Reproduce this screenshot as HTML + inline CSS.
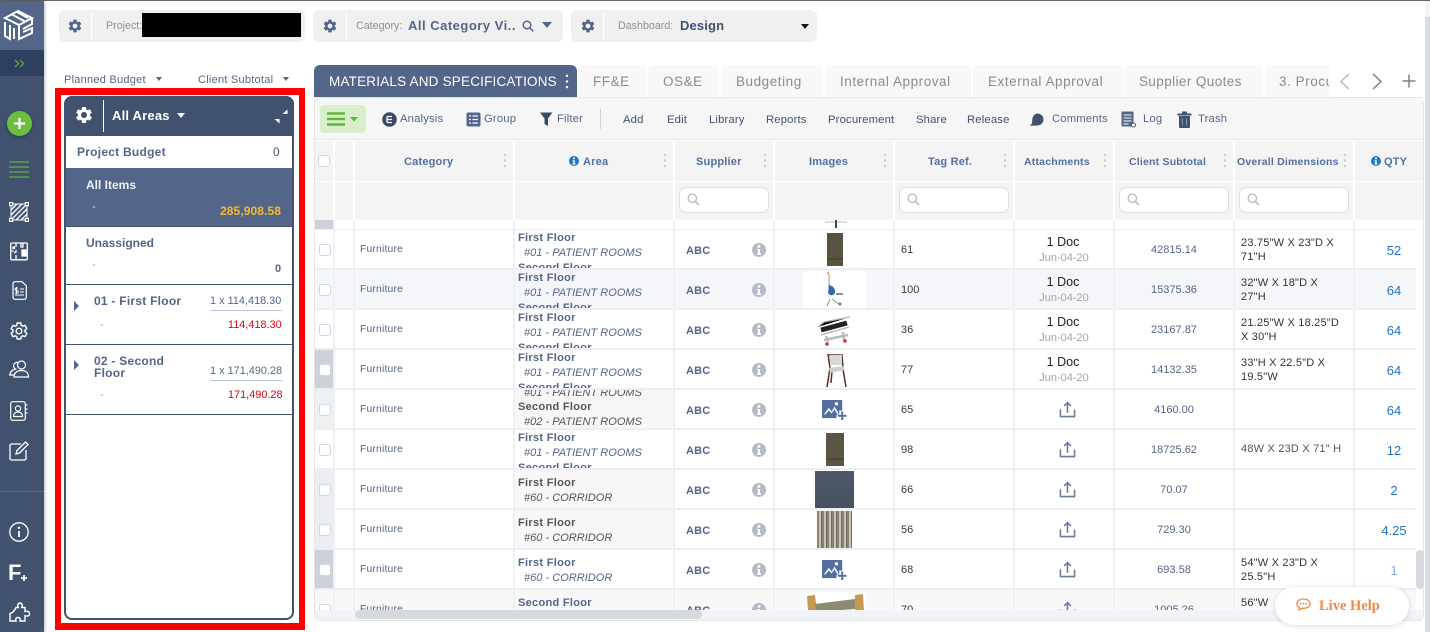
<!DOCTYPE html>
<html lang="en"><head><meta charset="utf-8"><title>Materials and Specifications</title>
<style>
*{box-sizing:border-box}
html,body{margin:0;padding:0;width:1430px;height:632px;overflow:hidden;background:#fff;font-family:"Liberation Sans",sans-serif;color:#536589}
.a{position:absolute;white-space:nowrap}
svg{position:absolute;display:block;overflow:visible}
.box{position:absolute;top:10px;height:32px;background:#f0f0f0;border-radius:6px}
.tab{position:absolute;top:65px;height:32px;background:#f8f8f8;border-radius:6px 6px 0 0;color:#8b8b8b;font-size:13.5px;line-height:33px;text-align:left;padding-left:15px;letter-spacing:.55px;white-space:nowrap;overflow:hidden}
.tb{position:absolute;font-size:11.3px;color:#41526f;line-height:14px;white-space:nowrap;letter-spacing:.15px}
.th{position:absolute;top:155px;font-size:11px;line-height:14px;font-weight:bold;color:#536f9f;white-space:nowrap;letter-spacing:.2px}
.fl{position:absolute;top:187px;height:26px;background:#fff;border:1px solid #dcdfe5;border-radius:7px}
.r{position:absolute;left:0;width:1102px;height:40px;background:#fff;border-bottom:1px solid #eceef2;border-top:1px solid #eceef2}
.r>*{position:absolute;white-space:nowrap}
.ck{left:4px;top:14px;width:12px;height:12px;background:#fff;border:1px solid #cfd6e4;border-radius:3px}
.fu{left:45px;top:13px;font-size:10.300px;line-height:14px;color:#536589;letter-spacing:.2px}
.ar{left:200px;top:0;width:159px;height:38px;overflow:hidden;font-size:11px;line-height:15px}
.ar b{position:absolute;left:3px;margin-top:1px;white-space:nowrap;letter-spacing:.3px}
.ar i{position:absolute;left:9px;margin-top:1px;white-space:nowrap;font-size:11px;letter-spacing:.02px}
.abc{left:371px;top:14px;font-size:11px;line-height:15px;font-weight:bold;color:#536589;letter-spacing:.2px}
.tg{left:586px;top:13px;font-size:11px;line-height:15px;color:#3a3a3a}
.dc{left:698px;width:100px;top:4px;text-align:center;font-size:12.500px;line-height:16px;color:#222}
.dt{left:699px;width:100px;top:21px;text-align:center;font-size:11px;line-height:14px;color:#a5a5a5}
.st{left:799px;width:120px;top:13px;text-align:center;font-size:11px;line-height:14px;color:#536589}
.di{left:926px;top:6px;font-size:11px;line-height:14px;color:#333;letter-spacing:.2px}
.q{left:1040px;width:78px;top:13px;text-align:center;font-size:13px;line-height:16px;color:#1e73c8}
.inf{left:437px;top:13px;color:#b4bac6}
.pn{position:absolute;left:66px;width:226px}
</style></head><body>
<svg width="0" height="0" style="position:absolute"><defs>
<symbol id="gear" viewBox="0 0 24 24"><path fill="currentColor" d="M19.14 12.94c.04-.3.06-.61.06-.94 0-.32-.02-.64-.07-.94l2.03-1.58a.49.49 0 0 0 .12-.61l-1.92-3.32a.488.488 0 0 0-.59-.22l-2.39.96c-.5-.38-1.03-.7-1.62-.94l-.36-2.54a.484.484 0 0 0-.48-.41h-3.84c-.24 0-.43.17-.47.41l-.36 2.54c-.59.24-1.13.57-1.62.94l-2.39-.96c-.22-.08-.47 0-.59.22L2.74 8.87c-.12.21-.08.47.12.61l2.03 1.58c-.05.3-.09.63-.09.94s.02.64.07.94l-2.03 1.58a.49.49 0 0 0-.12.61l1.92 3.32c.12.22.37.29.59.22l2.39-.96c.5.38 1.03.7 1.62.94l.36 2.54c.05.24.24.41.48.41h3.84c.24 0 .44-.17.47-.41l.36-2.54c.59-.24 1.13-.56 1.62-.94l2.39.96c.22.08.47 0 .59-.22l1.92-3.32c.12-.22.07-.47-.12-.61l-2.01-1.58zM12 15.6c-1.98 0-3.6-1.62-3.6-3.6s1.62-3.6 3.6-3.6 3.6 1.62 3.6 3.6-1.62 3.6-3.6 3.6z"/></symbol>
<symbol id="inf" viewBox="0 0 14 14"><circle cx="7" cy="7" r="7" fill="currentColor"/><circle cx="7" cy="3.4" r="1.4" fill="#fff"/><path d="M5 6h3v4.6h1.2V12H4.8v-1.4H6V7.3H5z" fill="#fff"/></symbol>
<symbol id="up" viewBox="0 0 18 18"><path d="M1.5 9v7.5h15V9M9 12.5V2M5.5 5.2 9 1.7l3.5 3.5" fill="none" stroke="#6b7d9e" stroke-width="1.7"/></symbol>
<symbol id="pic" viewBox="0 0 26 24"><path fill="#536f9f" d="M0 1h21v11h-3v4h-3v4H0z"/><path fill="#fff" d="M2 16l5-7 3 4 3-5 4 6v2H2z" opacity=".95"/><path fill="#536f9f" d="M3 17l4-5 3 3 3-4 3 5v1z"/><circle cx="15" cy="5" r="1.8" fill="#fff"/><path stroke="#536f9f" stroke-width="2" d="M21 13v9M16.500 17.500h9"/></symbol>
<symbol id="sr" viewBox="0 0 14 14"><circle cx="5.700" cy="5.700" r="4.500" fill="none" stroke="#a8adb6" stroke-width="1.200"/><path d="M9 9l4 4" stroke="#a8adb6" stroke-width="1.400"/></symbol>
<symbol id="dots" viewBox="0 0 4 16"><circle cx="2" cy="2" r="1.300" fill="#c9cdd4"/><circle cx="2" cy="8" r="1.300" fill="#c9cdd4"/><circle cx="2" cy="14" r="1.300" fill="#c9cdd4"/></symbol>
</defs></svg>

<!-- top line and page scrollbar -->
<div class="a" style="left:0;top:0;width:1430px;height:1px;background:#666"></div>
<div class="a" style="left:1425px;top:1px;width:5px;height:631px;background:#f3f4f5"></div>
<div class="a" style="left:1425px;top:17px;width:5px;height:615px;background:#d9dee1"></div>

<!-- sidebar -->
<div class="a" style="left:0;top:1px;width:44px;height:631px;background:#41526f;box-shadow:1px 0 3px rgba(0,0,0,.25)"></div>
<div class="a" style="left:0;top:1px;width:44px;height:49px;background:#536589"></div>
<div class="a" style="left:0;top:50px;width:44px;height:26px;background:#2f3f5f"></div>
<div class="a" style="left:0;top:491px;width:44px;height:1px;background:#5a6a87"></div>
<svg style="left:4px;top:9px" width="30" height="32" viewBox="0 0 30 32" fill="none" stroke="#fff" stroke-width="2"><path d="M1 9 14 2l14 7-13 7zM1 13v14l5 3V16M10 19v11M15 17v13l13-6V19l-9 4M28 9v6l-9 5M8 5.500l13 7M13 3l11 6"/></svg>
<svg style="left:14px;top:59px" width="11" height="9" viewBox="0 0 11 9" fill="none" stroke="#5cb440" stroke-width="1.200"><path d="M1 1l3.500 3.500L1 8M6 1l3.500 3.500L6 8"/></svg>
<div class="a" style="left:7px;top:111px;width:25px;height:25px;border-radius:50%;background:#6abf3f;box-shadow:0 1px 3px rgba(0,0,0,.35)"></div>
<svg style="left:13px;top:117px" width="13" height="13" viewBox="0 0 13 13"><path d="M6.500 1v11M1 6.500h11" stroke="#fff" stroke-width="2.200"/></svg>
<svg style="left:9px;top:161px" width="20" height="17" viewBox="0 0 20 17"><path d="M0 1h20M0 6h20M0 11h20M0 16h20" stroke="#5fb045" stroke-width="1.300"/></svg>
<svg style="left:9px;top:202px" width="20" height="20" viewBox="0 0 20 20" fill="none" stroke="#fff"><rect x="2" y="2" width="16" height="16" stroke-width="1"/><path d="M2 8 8 2M2 13 13 2M2 18 18 2M7 18 18 7M12 18l6-6" stroke-width="1.300"/><g fill="#41526f" stroke-width="1.200"><rect x=".6" y=".6" width="3" height="3"/><rect x="16.400" y=".6" width="3" height="3"/><rect x=".6" y="16.400" width="3" height="3"/><rect x="16.400" y="16.400" width="3" height="3"/></g></svg>
<svg style="left:10px;top:242px" width="18" height="19" viewBox="0 0 18 19" fill="none" stroke="#fff" stroke-width="1.300"><rect x=".7" y="1" width="16.600" height="16.800" rx="1"/><path d="M6 1v4M.7 9h3M6 8v2l-2 1M6 13v4.800M11 1v4h2V1M12 8h4v6h-4z"/><rect x="12.500" y="9" width="3" height="4.500" fill="#fff"/><rect x="3" y="5" width="1.500" height="1.500" fill="#fff"/></svg>
<svg style="left:12px;top:281px" width="15" height="19" viewBox="0 0 15 19" fill="none" stroke="#fff" stroke-width="1.200"><path d="M3 .7h7l4.300 4v11.600a2 2 0 0 1-2 2H3a2 2 0 0 1-2-2V2.700a2 2 0 0 1 2-2z"/><path d="M8 8h4M8 11h4M3 14h9M6 7H4.200a1 1 0 0 0 0 2.500h.8a1 1 0 0 1 0 2.500H3M4.500 6v7" stroke-width="1"/></svg>
<svg style="left:9px;top:321px;color:#fff" width="20" height="20" viewBox="0 0 24 24"><path fill="none" stroke="#fff" stroke-width="1.700" d="M19.140 12.940c.04-.3.06-.61.06-.94 0-.32-.02-.64-.07-.94l2.030-1.580a.49.49 0 0 0 .12-.61l-1.920-3.320a.488.488 0 0 0-.59-.22l-2.390.96c-.5-.38-1.030-.7-1.620-.94l-.36-2.540a.484.484 0 0 0-.48-.41h-3.840c-.24 0-.43.17-.47.41l-.36 2.540c-.59.24-1.130.57-1.620.94l-2.390-.96c-.22-.08-.47 0-.59.22L2.740 8.870c-.12.21-.08.47.12.61l2.030 1.580c-.05.3-.09.63-.09.94s.02.64.07.94l-2.030 1.580a.49.49 0 0 0-.12.61l1.920 3.320c.12.22.37.29.59.22l2.390-.96c.5.38 1.030.7 1.620.94l.36 2.540c.05.24.24.41.48.41h3.840c.24 0 .44-.17.47-.41l.36-2.540c.59-.24 1.130-.56 1.620-.94l2.390.96c.22.08.47 0 .59-.22l1.920-3.320c.12-.22.07-.47-.12-.61l-2.010-1.580z"/><circle cx="12" cy="12" r="3.400" fill="none" stroke="#fff" stroke-width="1.700"/></svg>
<svg style="left:9px;top:360px" width="20" height="18" viewBox="0 0 20 18" fill="none" stroke="#fff" stroke-width="1.200"><circle cx="12.500" cy="5" r="4"/><path d="M5 17c0-4 3-6.500 7.500-6.500S19.500 13 19.500 17z"/><path d="M9 2.500a3.500 3.500 0 0 0-2.500 6.500C3 10 1 12 .7 15H5"/></svg>
<svg style="left:10px;top:401px" width="18" height="20" viewBox="0 0 18 20" fill="none" stroke="#fff" stroke-width="1.200"><rect x=".7" y=".7" width="14.600" height="18.600" rx="2"/><circle cx="8" cy="7.500" r="2.600"/><path d="M3.500 15.500c0-3 2-4.500 4.500-4.500s4.500 1.500 4.500 4.500zM15.500 4h2M15.500 8h2M15.500 12h2"/></svg>
<svg style="left:9px;top:441px" width="20" height="20" viewBox="0 0 20 20" fill="none" stroke="#fff" stroke-width="1.300"><path d="M17 9v8.500a1.500 1.500 0 0 1-1.500 1.500h-13A1.500 1.500 0 0 1 1 17.500v-13A1.500 1.500 0 0 1 2.500 3H12"/><path d="M7 13l1-3.500L16.500 1 19 3.500 10.500 12z"/></svg>
<svg style="left:9px;top:522px" width="20" height="20" viewBox="0 0 20 20" fill="none" stroke="#fff"><circle cx="10" cy="10" r="9.200" stroke-width="1.300"/><path d="M10 9v6" stroke-width="1.800"/><circle cx="10" cy="5.800" r="1.200" fill="#fff" stroke="none"/></svg>
<div class="a" style="left:8px;top:560px;font-size:22px;line-height:26px;font-weight:bold;color:#fff">F</div>
<svg style="left:20px;top:574px" width="8" height="8" viewBox="0 0 8 8"><path d="M4 1v6M1 4h6" stroke="#fff" stroke-width="1.800"/></svg>
<svg style="left:9px;top:602px" width="21" height="21" viewBox="0 0 21 21" fill="none" stroke="#fff" stroke-width="1.400"><path d="M7 5.500h2.200C8 2.500 9.500 1 11 1s3 1.500 1.800 4.500H16v4c3-1 4.500.5 4.500 2.200s-1.500 3-4.500 2V19H11c.8-2.500-.5-3.500-2-3.500S6 16.500 7 19H1v-7.500l2.500-1L6 7.500z"/></svg>

<!-- top selectors -->
<div class="box" style="left:59px;width:246px"></div>
<div class="a" style="left:91px;top:11px;width:1px;height:30px;background:#fff"></div>
<svg style="left:67px;top:18px;color:#536589" width="16" height="16"><use href="#gear"/></svg>
<div class="a" style="left:106px;top:19px;font-size:10.700px;line-height:14px;color:#8a8f98">Project:</div>
<div class="a" style="left:142px;top:13px;width:159px;height:24px;background:#000"></div>

<div class="box" style="left:313px;width:250px"></div>
<div class="a" style="left:346px;top:11px;width:1px;height:30px;background:#fff"></div>
<svg style="left:322px;top:18px;color:#536589" width="16" height="16"><use href="#gear"/></svg>
<div class="a" style="left:356px;top:19px;font-size:10.700px;line-height:14px;color:#8a8f98">Category:</div>
<div class="a" style="left:408px;top:18px;font-size:13px;line-height:16px;font-weight:bold;color:#536589;letter-spacing:.5px">All Category Vi..</div>
<svg style="left:522px;top:20px" width="12" height="12" viewBox="0 0 12 12" fill="none" stroke="#536589" stroke-width="1.500"><circle cx="5" cy="5" r="3.800"/><path d="M8 8l3.300 3.300"/></svg>
<div class="a" style="left:542px;top:22px;border:5.500px solid transparent;border-top:6px solid #536589;border-bottom:0"></div>

<div class="box" style="left:571px;width:246px"></div>
<div class="a" style="left:603px;top:11px;width:1px;height:30px;background:#fff"></div>
<svg style="left:580px;top:18px;color:#536589" width="16" height="16"><use href="#gear"/></svg>
<div class="a" style="left:618px;top:19px;font-size:10.700px;line-height:14px;color:#8a8f98">Dashboard:</div>
<div class="a" style="left:680px;top:18px;font-size:13px;line-height:16px;font-weight:bold;color:#41526f;letter-spacing:.15px">Design</div>
<div class="a" style="left:801px;top:24px;border:4px solid transparent;border-top:5px solid #111;border-bottom:0"></div>

<div class="a" style="left:64px;top:73px;font-size:11px;line-height:14px;color:#536589;letter-spacing:.25px">Planned Budget</div>
<div class="a" style="left:156px;top:77px;border:3.500px solid transparent;border-top:4px solid #536589;border-bottom:0"></div>
<div class="a" style="left:198px;top:73px;font-size:11px;line-height:14px;color:#536589;letter-spacing:.25px">Client Subtotal</div>
<div class="a" style="left:283px;top:77px;border:3.500px solid transparent;border-top:4px solid #536589;border-bottom:0"></div>

<!-- left panel -->
<div class="a" style="left:55px;top:88px;width:250px;height:542px;border:7px solid #f00;border-left-width:6px;border-right-width:6px;background:#fff"></div>
<div class="a" style="left:64px;top:96px;width:230px;height:524px;border:2px solid #41526f;border-radius:8px;background:#fff"></div>
<div class="a" style="left:64px;top:96px;width:230px;height:40px;background:#41526f;border-radius:8px 8px 0 0"></div>
<svg style="left:74px;top:105px;color:#fff" width="20" height="20"><use href="#gear"/></svg>
<div class="a" style="left:103px;top:100px;width:1px;height:32px;background:#fff"></div>
<div class="a" style="left:112px;top:108px;font-size:13px;line-height:16px;font-weight:bold;color:#fff;letter-spacing:.2px">All Areas</div>
<div class="a" style="left:177px;top:113px;border:4.500px solid transparent;border-top:5px solid #fff;border-bottom:0"></div>
<svg style="left:274px;top:109px" width="14" height="15" viewBox="0 0 14 15" fill="#fff"><path d="M13.500.5V5H8.500zM.5 10h5v4.500z"/></svg>

<div class="a" style="left:77px;top:145px;font-size:12px;line-height:15px;font-weight:bold;color:#536589;letter-spacing:.25px">Project Budget</div>
<div class="a" style="left:273px;top:145px;font-size:12px;line-height:15px;color:#41526f">0</div>

<div class="pn" style="top:168px;height:59px;background:#536589;border-bottom:1px solid #41526f"></div>
<div class="a" style="left:86px;top:178px;font-size:12px;line-height:15px;font-weight:bold;color:#eef0f4">All Items</div>
<div class="a" style="left:92px;top:200px;font-size:11px;line-height:14px;color:#dfe3ea">-</div>
<div class="a" style="left:220px;top:204px;font-size:12px;line-height:14px;font-weight:bold;color:#f2bc2e;letter-spacing:.1px">285,908.58</div>

<div class="a" style="left:86px;top:236px;font-size:12px;line-height:15px;font-weight:bold;color:#536589">Unassigned</div>
<div class="a" style="left:92px;top:258px;font-size:11px;line-height:14px;color:#9aa3b3">-</div>
<div class="a" style="left:275px;top:262px;font-size:11px;line-height:14px;font-weight:bold;color:#536589">0</div>
<div class="pn" style="top:284px;height:1px;background:#41526f"></div>

<div class="a" style="left:74px;top:301px;border:5px solid transparent;border-left:5px solid #536589;border-right:0"></div>
<div class="a" style="left:94px;top:294px;font-size:12px;line-height:15px;font-weight:bold;color:#536589;letter-spacing:.25px">01 - First Floor</div>
<div class="a" style="left:210px;top:294px;font-size:10.800px;line-height:14px;color:#536589;letter-spacing:.05px">1 x 114,418.30</div>
<div class="a" style="left:210px;top:310px;width:72px;height:1px;background:#b9c5da"></div>
<div class="a" style="left:100px;top:318px;font-size:11px;line-height:14px;color:#9aa3b3">-</div>
<div class="a" style="left:228px;top:318px;font-size:10.800px;line-height:14px;color:#e00012;letter-spacing:.05px">114,418.30</div>
<div class="pn" style="top:344px;height:1px;background:#41526f"></div>

<div class="a" style="left:74px;top:360px;border:5px solid transparent;border-left:5px solid #536589;border-right:0"></div>
<div class="a" style="left:94px;top:355px;font-size:12px;line-height:12px;font-weight:bold;color:#536589;letter-spacing:.25px">02 - Second<br>Floor</div>
<div class="a" style="left:210px;top:364px;font-size:10.800px;line-height:14px;color:#536589;letter-spacing:.05px">1 x 171,490.28</div>
<div class="a" style="left:210px;top:380px;width:72px;height:1px;background:#b9c5da"></div>
<div class="a" style="left:100px;top:388px;font-size:11px;line-height:14px;color:#9aa3b3">-</div>
<div class="a" style="left:228px;top:388px;font-size:10.800px;line-height:14px;color:#e00012;letter-spacing:.05px">171,490.28</div>
<div class="pn" style="top:414px;height:1px;background:#41526f"></div>

<!-- tabs -->
<div class="tab" style="left:314px;width:263px;background:#536589;color:#fff;letter-spacing:.2px">MATERIALS AND SPECIFICATIONS</div>
<svg style="left:565px;top:74px" width="4" height="15" viewBox="0 0 4 16"><circle cx="2" cy="2" r="1.300" fill="#fff"/><circle cx="2" cy="8" r="1.300" fill="#fff"/><circle cx="2" cy="14" r="1.300" fill="#fff"/></svg>
<div class="tab" style="left:578px;width:69px">FF&amp;E</div>
<div class="tab" style="left:648px;width:71px">OS&amp;E</div>
<div class="tab" style="left:721px;width:102px">Budgeting</div>
<div class="tab" style="left:825px;width:146px">Internal Approval</div>
<div class="tab" style="left:973px;width:150px">External Approval</div>
<div class="tab" style="left:1124px;width:139px;letter-spacing:.4px">Supplier Quotes</div>
<div class="tab" style="left:1265px;width:64px;padding-left:14px;border-radius:6px 0 0 0">3. Procurement</div>
<svg style="left:1339px;top:73px" width="12" height="17" viewBox="0 0 12 17" fill="none" stroke="#b5b8bd" stroke-width="1.500"><path d="M10 1 2 8.500l8 7.500"/></svg>
<svg style="left:1371px;top:73px" width="12" height="17" viewBox="0 0 12 17" fill="none" stroke="#7b8088" stroke-width="1.500"><path d="M2 1l8 7.500L2 16"/></svg>
<svg style="left:1402px;top:74px" width="14" height="14" viewBox="0 0 14 14"><path d="M7 .5v13M.5 7h13" stroke="#7b8088" stroke-width="1.500"/></svg>

<!-- table shell -->
<div class="a" style="left:314px;top:97px;width:1110px;height:524px;background:#fff;border:1px solid #e3e5e9;border-radius:0 6px 6px 6px"></div>
<div class="a" style="left:315px;top:98px;width:1108px;height:42px;background:#f6f6f7;border-bottom:1px solid #e3e5e9"></div>
<div class="a" style="left:320px;top:105px;width:46px;height:28px;background:#d9efcb;border-radius:4px"></div>
<svg style="left:327px;top:112px" width="36" height="14" viewBox="0 0 36 14"><path d="M0 1.500h18M0 7h18M0 12.500h18" stroke="#62b53c" stroke-width="2.500"/><path d="M23 5h8l-4 4.500z" fill="#62b53c"/></svg>
<svg style="left:382px;top:112px" width="15" height="15" viewBox="0 0 15 15"><circle cx="7.500" cy="7.500" r="7.300" fill="#3b4a6b"/><path d="M5 4.500h5M5 7.500h5M5 10.500h5M5 4.500v6" stroke="#fff" stroke-width="1.300"/></svg>
<div class="tb" style="left:400px;top:112px;color:#536589">Analysis</div>
<svg style="left:466px;top:112px" width="15" height="15" viewBox="0 0 15 15"><rect x=".5" y=".5" width="14" height="14" rx="2" fill="#536589"/><path d="M3 4h2M6.500 4H12M3 7.500h2M6.500 7.500H12M3 11h2M6.500 11H12" stroke="#fff" stroke-width="1.200"/></svg>
<div class="tb" style="left:484px;top:112px;color:#536589">Group</div>
<svg style="left:540px;top:112px" width="13" height="14" viewBox="0 0 13 14"><path d="M0 .5h12.500L8 6.500V14l-3.500-2V6.500z" fill="#3b4a6b"/></svg>
<div class="tb" style="left:557px;top:112px;color:#536589">Filter</div>
<div class="a" style="left:600px;top:109px;width:1px;height:20px;background:#cdd2da"></div>
<div class="tb" style="left:623px;top:113px">Add</div>
<div class="tb" style="left:667px;top:113px">Edit</div>
<div class="tb" style="left:709px;top:113px">Library</div>
<div class="tb" style="left:766px;top:113px">Reports</div>
<div class="tb" style="left:828px;top:113px">Procurement</div>
<div class="tb" style="left:916px;top:113px">Share</div>
<div class="tb" style="left:967px;top:113px">Release</div>
<svg style="left:1029px;top:112px" width="16" height="15" viewBox="0 0 16 15"><path d="M9 1.500a6 6 0 0 1 1 11.800c-3 .6-6 .2-9.500.5 1.500-1 2.500-2 2.700-3.800C2.800 5 5 1.500 9 1.500z" fill="#41526f"/></svg>
<div class="tb" style="left:1052px;top:112px;color:#536589">Comments</div>
<svg style="left:1121px;top:111px" width="16" height="17" viewBox="0 0 16 17"><rect x=".5" y=".5" width="12" height="15" rx="1" fill="#536589"/><path d="M2.500 4h8M2.500 7h8M2.500 10h8M2.500 13h5" stroke="#fff"/><circle cx="12.500" cy="14" r="2" fill="#fff" stroke="#41526f"/></svg>
<div class="tb" style="left:1143px;top:112px;color:#536589">Log</div>
<svg style="left:1177px;top:111px" width="15" height="17" viewBox="0 0 15 17"><path d="M5 1.500h5M.5 3.500h14" stroke="#41526f" stroke-width="2"/><path d="M2 5h11v11a1 1 0 0 1-1 1H3a1 1 0 0 1-1-1z" fill="#41526f"/><path d="M5.500 7.500v7M9.500 7.500v7" stroke="#8795ad"/></svg>
<div class="tb" style="left:1198px;top:112px;color:#536589">Trash</div>

<!-- table head -->
<div class="a" style="left:315px;top:141px;width:1108px;height:79px;background:#f4f4f4"></div>
<div class="a" style="left:315px;top:181px;width:1108px;height:1px;background:#fff"></div>
<div class="a" style="left:318px;top:155px;width:12px;height:12px;background:#fff;border:1px solid #cfd6e4;border-radius:3px"></div>
<div class="th" style="left:404px">Category</div>
<svg style="left:569px;top:156px;color:#1f78c8" width="10" height="10"><use href="#inf"/></svg>
<div class="th" style="left:583px">Area</div>
<div class="th" style="left:696px">Supplier</div>
<div class="th" style="left:809px">Images</div>
<div class="th" style="left:928px">Tag Ref.</div>
<div class="th" style="left:1024px;font-size:10.500px">Attachments</div>
<div class="th" style="left:1129px;font-size:10.500px">Client Subtotal</div>
<div class="th" style="left:1237px;font-size:10.500px">Overall Dimensions</div>
<svg style="left:1371px;top:156px;color:#1f78c8" width="10" height="10"><use href="#inf"/></svg>
<div class="th" style="left:1384px">QTY</div>
<svg style="left:503px;top:153px" width="4" height="15"><use href="#dots"/></svg>
<svg style="left:663px;top:153px" width="4" height="15"><use href="#dots"/></svg>
<svg style="left:763px;top:153px" width="4" height="15"><use href="#dots"/></svg>
<svg style="left:883px;top:153px" width="4" height="15"><use href="#dots"/></svg>
<svg style="left:1003px;top:153px" width="4" height="15"><use href="#dots"/></svg>
<svg style="left:1103px;top:153px" width="4" height="15"><use href="#dots"/></svg>
<svg style="left:1223px;top:153px" width="4" height="15"><use href="#dots"/></svg>
<svg style="left:1343px;top:153px" width="4" height="15"><use href="#dots"/></svg>
<div class="fl" style="left:679px;width:90px"></div><svg style="left:687px;top:193px" width="13" height="13"><use href="#sr"/></svg>
<div class="fl" style="left:899px;width:110px"></div><svg style="left:907px;top:193px" width="13" height="13"><use href="#sr"/></svg>
<div class="fl" style="left:1119px;width:110px"></div><svg style="left:1127px;top:193px" width="13" height="13"><use href="#sr"/></svg>
<div class="fl" style="left:1239px;width:110px"></div><svg style="left:1247px;top:193px" width="13" height="13"><use href="#sr"/></svg>

<!-- table body -->
<div class="a" style="left:315px;top:220px;width:1101px;height:390px;overflow:hidden;background:#fff">
  <div class="a" style="left:0;top:0;width:19px;height:9px;background:#cdd1d9"></div>
  <svg style="left:508px;top:0" width="26" height="9" viewBox="0 0 26 9"><path d="M2 2h22" stroke="#bbb"/><path d="M13 0v8" stroke="#444" stroke-width="2"/></svg>

  <div class="r" style="top:9px"><div class="ck"></div><div class="fu">Furniture</div><div class="ar"><b style="top:0">First Floor</b><i style="top:15px">#01 - PATIENT ROOMS</i><b style="top:30px">Second Floor</b></div><div class="abc">ABC</div><svg class="inf" width="14" height="14"><use href="#inf"/></svg><svg style="left:511px;top:2px" width="18" height="36" viewBox="0 0 18 36"><rect x="1" y="1" width="16" height="33" fill="#57533f"/><path d="M1 27h16" stroke="#3f3c2e"/></svg><div class="tg">61</div><div class="dc">1 Doc</div><div class="dt">Jun-04-20</div><div class="st">42815.14</div><div class="di">23.75"W X 23"D X<br>71"H</div><div class="q">52</div></div>

  <div class="r" style="top:49px;background:#f4f6fa"><div class="ck"></div><div class="fu">Furniture</div><div class="ar"><b style="top:0">First Floor</b><i style="top:15px">#01 - PATIENT ROOMS</i><b style="top:30px">Second Floor</b></div><div class="abc">ABC</div><svg class="inf" width="14" height="14"><use href="#inf"/></svg><svg style="left:488px;top:1px" width="63" height="37" viewBox="0 0 63 37"><rect width="63" height="37" fill="#fff"/><path d="M26 3v20M27 28l-3 7M29 28l8 6" stroke="#8d94a0"/><circle cx="25" cy="2" r="1.200" fill="#f3b13c"/><path d="M26 14c4 1 7 4 6 8-2 3-5 3-7 0z" fill="#2f6bb0"/><rect x="33" y="22" width="7" height="2" fill="#8a919c"/><circle cx="37" cy="33" r="1.500" fill="#777"/></svg><div class="tg">100</div><div class="dc">1 Doc</div><div class="dt">Jun-04-20</div><div class="st">15375.36</div><div class="di">32"W X 18"D X<br>27"H</div><div class="q">64</div></div>

  <div class="r" style="top:89px"><div class="ck"></div><div class="fu">Furniture</div><div class="ar"><b style="top:0">First Floor</b><i style="top:15px">#01 - PATIENT ROOMS</i><b style="top:30px">Second Floor</b></div><div class="abc">ABC</div><svg style="left:500px;top:2px" width="40" height="36" viewBox="0 0 40 36"><path d="M6 18 32 11" stroke="#222" stroke-width="5"/><path d="M3 15l6-5 26-5M6 23l28-8" stroke="#b5b5b5" stroke-width="1.300"/><path d="M11 24l2 6M28 20l1 8M9 28l24-5" stroke="#bbb" stroke-width="2.500"/><circle cx="12" cy="32" r="1.800" fill="#c33"/><circle cx="30" cy="29" r="1.800" fill="#c33"/></svg><svg class="inf" width="14" height="14"><use href="#inf"/></svg><div class="tg">36</div><div class="dc">1 Doc</div><div class="dt">Jun-04-20</div><div class="st">23167.87</div><div class="di">21.25"W X 18.25"D<br>X 30"H</div><div class="q">64</div></div>

  <div class="r" style="top:129px"><div style="left:0;top:0;width:18px;height:38px;background:#cdd1d9"></div><div class="ck"></div><div class="fu">Furniture</div><div class="ar"><b style="top:0">First Floor</b><i style="top:15px">#01 - PATIENT ROOMS</i><b style="top:30px">Second Floor</b></div><div class="abc">ABC</div><svg class="inf" width="14" height="14"><use href="#inf"/></svg><svg style="left:505px;top:1px" width="30" height="37" viewBox="0 0 30 37" fill="none"><path d="M8 3l2 14-3 19M9 4h13l1 13M12 20l-1 12M23 18l3 18" stroke="#5d2d25" stroke-width="1.500"/><path d="M10 4h12v10H10z" fill="#d8d8d8"/><path d="M9 17l14-2 2 4-15 3z" fill="#cfcfcf"/></svg><div class="tg">77</div><div class="dc">1 Doc</div><div class="dt">Jun-04-20</div><div class="st">14132.35</div><div class="di">33"H X 22.5"D X<br>19.5"W</div><div class="q">64</div></div>

  <div class="r" style="top:169px"><div style="left:0;top:0;width:18px;height:38px;background:#eff0f2"></div><div class="ck"></div><div class="fu">Furniture</div><div class="ar" style="background:#f7f7f7;color:#555"><i style="top:-5px">#01 - PATIENT ROOMS</i><b style="top:9px">Second Floor</b><i style="top:24px">#02 - PATIENT ROOMS</i></div><div class="abc">ABC</div><svg class="inf" width="14" height="14"><use href="#inf"/></svg><svg style="left:507px;top:9px" width="25" height="23"><use href="#pic"/></svg><div class="tg">65</div><svg style="left:744px;top:11px" width="17" height="17"><use href="#up"/></svg><div class="st">4160.00</div><div class="q">64</div></div>

  <div class="r" style="top:209px"><div class="ck"></div><div class="fu">Furniture</div><div class="ar"><b style="top:0">First Floor</b><i style="top:15px">#01 - PATIENT ROOMS</i><b style="top:30px">Second Floor</b></div><div class="abc">ABC</div><svg class="inf" width="14" height="14"><use href="#inf"/></svg><svg style="left:510px;top:2px" width="20" height="36" viewBox="0 0 20 36"><rect x="1" y="1" width="18" height="33" fill="#5a5643"/><path d="M1 27h18" stroke="#3f3c2e"/></svg><div class="tg">98</div><svg style="left:744px;top:11px" width="17" height="17"><use href="#up"/></svg><div class="st">18725.62</div><div class="di" style="top:12px;color:#555">48W X 23D X 71" H</div><div class="q">12</div></div>

  <div class="r" style="top:249px"><div style="left:0;top:0;width:18px;height:38px;background:#eceef1"></div><div class="ck"></div><div class="fu">Furniture</div><div class="ar" style="background:#f7f7f7;color:#555"><b style="top:5px">First Floor</b><i style="top:20px">#60 - CORRIDOR</i></div><div class="abc">ABC</div><svg class="inf" width="14" height="14"><use href="#inf"/></svg><div style="left:500px;top:1px;width:39px;height:37px;background:linear-gradient(#4d586a,#485160)"></div><div class="tg">66</div><svg style="left:744px;top:11px" width="17" height="17"><use href="#up"/></svg><div class="st">70.07</div><div class="q">2</div></div>

  <div class="r" style="top:289px"><div style="left:0;top:0;width:18px;height:38px;background:#eceef1"></div><div class="ck"></div><div class="fu">Furniture</div><div class="ar" style="background:#f7f7f7;color:#555"><b style="top:5px">First Floor</b><i style="top:20px">#60 - CORRIDOR</i></div><div class="abc">ABC</div><svg class="inf" width="14" height="14"><use href="#inf"/></svg><div style="left:502px;top:1px;width:35px;height:37px;background:repeating-linear-gradient(90deg,#8a8170 0 2px,#c9c5b8 2px 4px,#6f6c63 4px 5px)"></div><div class="tg">56</div><svg style="left:744px;top:11px" width="17" height="17"><use href="#up"/></svg><div class="st">729.30</div><div class="q">4.25</div></div>

  <div class="r" style="top:329px"><div style="left:0;top:0;width:18px;height:38px;background:#cdd1d9"></div><div class="ck"></div><div class="fu">Furniture</div><div class="ar"><b style="top:5px">First Floor</b><i style="top:20px">#60 - CORRIDOR</i></div><div class="abc">ABC</div><svg class="inf" width="14" height="14"><use href="#inf"/></svg><svg style="left:507px;top:9px" width="25" height="23"><use href="#pic"/></svg><div class="tg">68</div><svg style="left:744px;top:11px" width="17" height="17"><use href="#up"/></svg><div class="st">693.58</div><div class="di">54"W X 23"D X<br>25.5"H</div><div class="q" style="color:#7fb0e2">1</div></div>

  <div class="r" style="top:369px;background:#f8f8f8"><div class="ck"></div><div class="fu">Furniture</div><div class="ar"><b style="top:5px">Second Floor</b></div><div class="abc">ABC</div><svg class="inf" width="14" height="14"><use href="#inf"/></svg><svg style="left:490px;top:2px" width="60" height="24" viewBox="0 0 60 24"><rect width="60" height="24" fill="#fff"/><path d="M2 4l8-1 2 17H3zM50 3l8-1 1 18-9 1z" fill="#c49a55"/><path d="M10 12 50 7v10L12 20z" fill="#8d8a72"/></svg><div class="tg">70</div><svg style="left:744px;top:11px" width="17" height="17"><use href="#up"/></svg><div class="st">1005.26</div><div class="di">56"W</div></div>

  <!-- column lines -->
  <div class="a" style="left:18px;top:0;width:2px;height:390px;background:#eef0f3"></div>
  <div class="a" style="left:38px;top:0;width:2px;height:390px;background:#eef0f3"></div>
  <div class="a" style="left:198px;top:0;width:2px;height:390px;background:#eef0f3"></div>
  <div class="a" style="left:358px;top:0;width:2px;height:390px;background:#eef0f3"></div>
  <div class="a" style="left:458px;top:0;width:2px;height:390px;background:#eef0f3"></div>
  <div class="a" style="left:578px;top:0;width:2px;height:390px;background:#eef0f3"></div>
  <div class="a" style="left:698px;top:0;width:2px;height:390px;background:#eef0f3"></div>
  <div class="a" style="left:798px;top:0;width:2px;height:390px;background:#eef0f3"></div>
  <div class="a" style="left:918px;top:0;width:2px;height:390px;background:#eef0f3"></div>
  <div class="a" style="left:1038px;top:0;width:2px;height:390px;background:#eef0f3"></div>
</div>

<!-- header column separators -->
<div class="a" style="left:333px;top:141px;width:2px;height:79px;background:#fff"></div>
<div class="a" style="left:353px;top:141px;width:2px;height:79px;background:#fff"></div>
<div class="a" style="left:513px;top:141px;width:2px;height:79px;background:#fff"></div>
<div class="a" style="left:673px;top:141px;width:2px;height:79px;background:#fff"></div>
<div class="a" style="left:773px;top:141px;width:2px;height:79px;background:#fff"></div>
<div class="a" style="left:893px;top:141px;width:2px;height:79px;background:#fff"></div>
<div class="a" style="left:1013px;top:141px;width:2px;height:79px;background:#fff"></div>
<div class="a" style="left:1113px;top:141px;width:2px;height:79px;background:#fff"></div>
<div class="a" style="left:1233px;top:141px;width:2px;height:79px;background:#fff"></div>
<div class="a" style="left:1353px;top:141px;width:2px;height:79px;background:#fff"></div>

<!-- scrollbars -->
<div class="a" style="left:315px;top:610px;width:1108px;height:10px;background:#f2f3f6;border-radius:0 0 6px 6px"></div>
<div class="a" style="left:355px;top:610px;width:347px;height:9px;background:#d6d9de;border-radius:5px"></div>
<div class="a" style="left:1416px;top:550px;width:8px;height:39px;background:#d6d9de;border-radius:4px"></div>

<!-- live help -->
<div class="a" style="left:1275px;top:587px;width:134px;height:38px;background:#fff;border-radius:19px;box-shadow:0 1px 6px rgba(0,0,0,.14)"></div>
<svg style="left:1296px;top:598px" width="15" height="13" viewBox="0 0 15 13"><path d="M7.500 1C3.500 1 1 3 1 5.700c0 1.600 1 2.900 2.400 3.700L3 12l3.200-1.800c.4.100.9.100 1.300.1 4 0 6.500-2 6.500-4.600S11.500 1 7.500 1z" fill="none" stroke="#f0883f" stroke-width="1.300"/><circle cx="4.700" cy="5.700" r=".9" fill="#f0883f"/><circle cx="7.500" cy="5.700" r=".9" fill="#f0883f"/><circle cx="10.300" cy="5.700" r=".9" fill="#f0883f"/></svg>
<div class="a" style="left:1319px;top:598px;font-family:'Liberation Serif',serif;font-size:14.500px;line-height:17px;font-weight:bold;color:#f0883f">Live Help</div>
</body></html>
